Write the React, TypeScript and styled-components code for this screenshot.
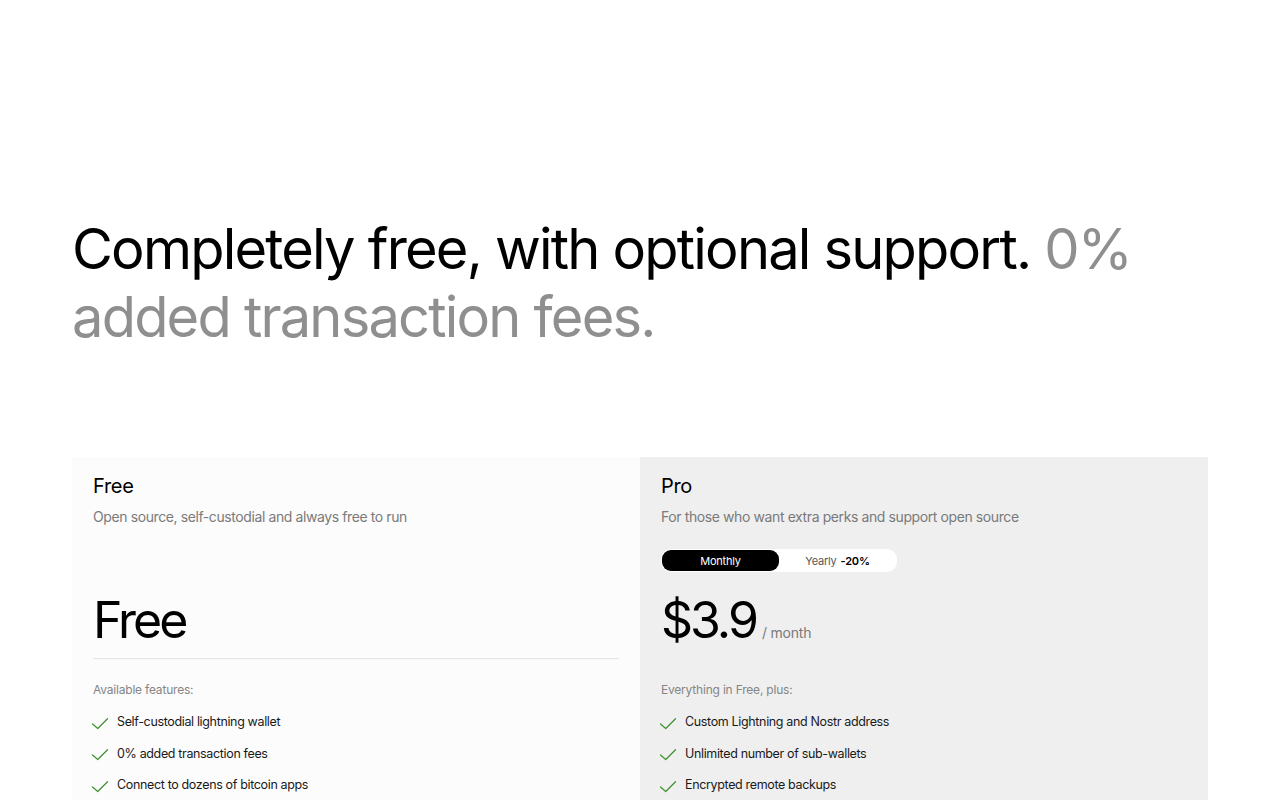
import React from "react";
import styled, { createGlobalStyle } from "styled-components";

const Global = createGlobalStyle`
  html, body { margin: 0; padding: 0; background: #ffffff; }
  body { font-family: Inter, "Noto Sans", sans-serif; color: #000; overflow: hidden; }
  * { box-sizing: border-box; }
`;

const Page = styled.main`
  width: 1280px;
  height: 800px;
  padding: 215px 72px 0 72px;
  display: flex;
  flex-direction: column;
  overflow: hidden;
`;

const Heading = styled.h1`
  margin: 0;
  max-width: 1150px;
  font-size: 56px;
  line-height: 68px;
  font-weight: 400;
  letter-spacing: -1.8px;
  color: #000;
`;

const Muted = styled.span`
  color: #8f8f8f;
  white-space: nowrap;
`;

const Cards = styled.section`
  margin-top: 106px;
  display: grid;
  grid-template-columns: 568px 568px;
`;

const Card = styled.div<{ $pro?: boolean }>`
  background: ${(p) => (p.$pro ? "#efefef" : "#fcfcfc")};
  padding: 16px 21px 20px 21px;
  display: flex;
  flex-direction: column;
`;

const Title = styled.h2`
  margin: 0;
  font-size: 20px;
  line-height: 26px;
  font-weight: 400;
  letter-spacing: -0.3px;
`;

const Subtitle = styled.p`
  margin: 8px 0 0 0;
  font-size: 14px;
  line-height: 20px;
  color: #7a7a7a;
  letter-spacing: -0.4px;
`;

const ToggleSlot = styled.div`
  margin-top: 22px;
  height: 24px;
  display: flex;
`;

const Toggle = styled.div`
  width: 236px;
  height: 23px;
  background: #ffffff;
  border-radius: 10px;
  display: grid;
  grid-template-columns: 117px 1fr;
  padding: 1px;
`;

const ToggleOption = styled.div<{ $active?: boolean }>`
  display: flex;
  align-items: center;
  justify-content: center;
  gap: 4px;
  border-radius: 9px;
  font-size: 11px;
  letter-spacing: -0.2px;
  background: ${(p) => (p.$active ? "#000" : "transparent")};
  color: ${(p) => (p.$active ? "#fff" : "#555")};
`;

const Discount = styled.b`
  color: #000;
  font-weight: 600;
`;

const PriceRow = styled.div`
  margin-top: 17px;
  display: flex;
  align-items: baseline;
  gap: 6px;
  height: 60px;
`;

const Price = styled.span`
  font-size: 50px;
  line-height: 60px;
  font-weight: 400;
  letter-spacing: -3px;
`;

const Per = styled.span`
  font-size: 14px;
  color: #7a7a7a;
  letter-spacing: -0.2px;
`;

const Divider = styled.hr<{ $pro?: boolean }>`
  margin: 8px 0 0 0;
  border: 0;
  height: 1px;
  background: ${(p) => (p.$pro ? "#efefef" : "#e6e6e6")};
  box-shadow: 0 1px 1px ${(p) => (p.$pro ? "transparent" : "rgba(0,0,0,0.03)")};
`;

const FeaturesLabel = styled.div`
  margin-top: 23px;
  font-size: 12px;
  line-height: 16px;
  color: #858585;
  letter-spacing: -0.2px;
`;

const FeatureList = styled.ul`
  list-style: none;
  margin: 8px 0 0 0;
  padding: 0;
  display: flex;
  flex-direction: column;
`;

const Feature = styled.li`
  display: flex;
  align-items: center;
  gap: 8px;
  height: 31.5px;
  font-size: 12.5px;
  color: #1a1a1a;
  letter-spacing: -0.35px;
`;

const CheckIcon = () => (
  <svg width="18" height="18" viewBox="0 0 24 24" fill="none" stroke="#3f8f2f" strokeWidth="1.6" strokeLinecap="round" strokeLinejoin="round" style={{ marginTop: 4, marginLeft: -2 }}>
    <path d="M22 5 9 18l-7-6" />
  </svg>
);

const freeFeatures = ["Self-custodial lightning wallet", "0% added transaction fees", "Connect to dozens of bitcoin apps"];
const proFeatures = ["Custom Lightning and Nostr address", "Unlimited number of sub-wallets", "Encrypted remote backups"];

export default function App() {
  return (
    <>
      <Global />
      <Page>
        <Heading>
          <span>Completely free, with optional support.</span> <Muted>0%</Muted>{" "}
          <Muted>added transaction fees.</Muted>
        </Heading>
        <Cards>
          <Card>
            <Title>Free</Title>
            <Subtitle>Open source, self-custodial and always free to run</Subtitle>
            <ToggleSlot />
            <PriceRow>
              <Price>Free</Price>
            </PriceRow>
            <Divider />
            <FeaturesLabel>Available features:</FeaturesLabel>
            <FeatureList>
              {freeFeatures.map((f) => (
                <Feature key={f}>
                  <CheckIcon />
                  {f}
                </Feature>
              ))}
            </FeatureList>
          </Card>
          <Card $pro>
            <Title>Pro</Title>
            <Subtitle>For those who want extra perks and support open source</Subtitle>
            <ToggleSlot>
              <Toggle>
                <ToggleOption $active>Monthly</ToggleOption>
                <ToggleOption>
                  Yearly <Discount>-20%</Discount>
                </ToggleOption>
              </Toggle>
            </ToggleSlot>
            <PriceRow>
              <Price>$3.9</Price>
              <Per>/ month</Per>
            </PriceRow>
            <Divider $pro />
            <FeaturesLabel>Everything in Free, plus:</FeaturesLabel>
            <FeatureList>
              {proFeatures.map((f) => (
                <Feature key={f}>
                  <CheckIcon />
                  {f}
                </Feature>
              ))}
            </FeatureList>
          </Card>
        </Cards>
      </Page>
    </>
  );
}
